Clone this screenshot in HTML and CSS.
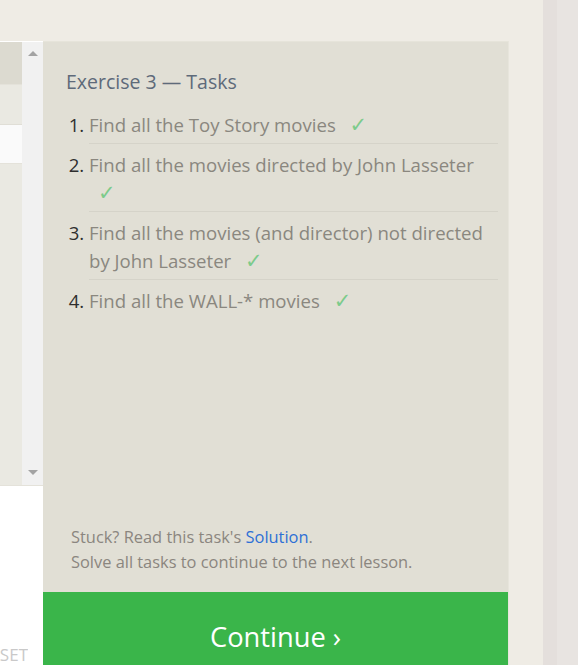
FILE: index.html
```html
<!DOCTYPE html>
<html>
<head>
<meta charset="utf-8">
<link rel="stylesheet" href="styles.css">
</head>
<body>
<div class="page">
  <div class="main">
    <div class="topbar"></div>
    <div class="workspace">
      <div class="editor-col">
        <div class="editor">
          <div class="code">
            <div class="row row-head"></div>
            <div class="row row-a"></div>
            <div class="row row-input"></div>
            <div class="row row-rest"></div>
          </div>
          <div class="scrollbar">
            <span class="arrow arrow-up"></span>
            <span class="arrow arrow-down"></span>
          </div>
        </div>
        <div class="editor-foot">
          <div class="reset"><span>RESET</span></div>
        </div>
      </div>
      <section class="tasks">
        <div class="tasks-body">
          <h2 class="tasks-title">Exercise 3 — Tasks</h2>
          <ol class="task-list">
            <li class="task">Find all the Toy Story movies <span class="check">✓</span></li>
            <li class="task">Find all the movies directed by John Lasseter <span class="check">✓</span></li>
            <li class="task">Find all the movies (and director) not directed by John Lasseter <span class="check">✓</span></li>
            <li class="task">Find all the WALL-* movies <span class="check">✓</span></li>
          </ol>
          <div class="help">
            <p>Stuck? Read this task's <a class="link" href="#">Solution</a>.</p>
            <p>Solve all tasks to continue to the next lesson.</p>
          </div>
        </div>
        <div class="continue">Continue ›</div>
      </section>
      <div class="gutter"></div>
    </div>
  </div>
  <div class="side-strip">
    <div class="strip-a"></div>
    <div class="strip-b"></div>
  </div>
</div>
</body>
</html>
```
FILE: styles.css
```css
html, body {
  margin: 0;
  padding: 0;
}
body {
  background: #efece5;
  font-family: "Open Sans", "Noto Sans", sans-serif;
  overflow: hidden;
}
.page {
  display: flex;
  width: 578px;
  height: 665px;
  overflow: hidden;
}
.main {
  width: 543px;
  flex: none;
  display: flex;
  flex-direction: column;
  background: #efece5;
}
.topbar {
  height: 41px;
  flex: none;
}
.workspace {
  display: flex;
  height: 641px;
  flex: none;
}
.editor-col {
  width: 43px;
  flex: none;
  display: flex;
  flex-direction: column;
  padding-top: 1px;
  background: #ffffff;
}
.editor {
  display: flex;
  height: 443px;
  border-bottom: 1px solid #e4e2da;
}
.code {
  width: 22px;
  display: flex;
  flex-direction: column;
}
.row-head {
  height: 42px;
  background: #dcdad0;
  border-bottom: 1px solid #e4e2da;
}
.row-a {
  height: 39px;
  background: #eae9e2;
  border-bottom: 1px solid #e0ded6;
}
.row-input {
  height: 38px;
  background: #fafafa;
  border-bottom: 1px solid #e4e2da;
}
.row-rest {
  flex: 1;
  background: #eae9e2;
}
.scrollbar {
  width: 21px;
  background: #f1f1f1;
  display: flex;
  flex-direction: column;
  justify-content: space-between;
  align-items: center;
  padding: 9px 0 10px;
  box-sizing: border-box;
}
.arrow {
  width: 0;
  height: 0;
  border-left: 5px solid transparent;
  border-right: 5px solid transparent;
}
.arrow-up {
  border-bottom: 5px solid #a3a3a3;
}
.arrow-down {
  border-top: 5px solid #a3a3a3;
}
.editor-foot {
  height: 180px;
  flex: none;
  display: flex;
  align-items: flex-end;
}
.reset {
  width: 28px;
  overflow: hidden;
  display: flex;
  justify-content: flex-end;
}
.reset span {
  font-size: 17px;
  line-height: 22px;
  color: #c9c9c9;
  white-space: nowrap;
}
.tasks {
  width: 466px;
  flex: none;
  display: flex;
  flex-direction: column;
  background: #e1dfd5;
  border-top: 1px solid #e6e4da;
  border-right: 1px solid #e7e5dc;
  box-sizing: border-box;
}
.tasks-body {
  flex: 1;
  display: flex;
  flex-direction: column;
  padding: 26px 10px 0 23px;
}
.tasks-title {
  margin: 0 0 8px;
  font-size: 19.5px;
  line-height: 28px;
  font-weight: normal;
  color: #5e6a7a;
}
.task-list {
  margin: 0;
  padding: 0 0 0 23px;
  flex: 1;
}
.task {
  font-size: 18.6px;
  line-height: 28px;
  color: #8a877f;
  padding: 7px 0 4px;
  border-bottom: 1px solid #d5d3c9;
}
.task:last-child {
  border-bottom: none;
}
.task::marker {
  color: #2e2e2e;
}
.check {
  font-family: "DejaVu Sans", sans-serif;
  font-size: 21px;
  line-height: 1;
  color: #7ccb8b;
  margin-left: 9px;
}
.help {
  padding: 0 0 18px 5px;
}
.help p {
  margin: 0;
  font-size: 16.4px;
  line-height: 25px;
  color: #8b867f;
}
.link {
  color: #2d6fd6;
  text-decoration: none;
}
.continue {
  flex: none;
  height: 90px;
  background: #3ab54a;
  color: #ffffff;
  font-size: 27.3px;
  line-height: 90px;
  text-align: center;
}
.gutter {
  flex: 1;
}
.side-strip {
  flex: 1;
  display: flex;
}
.strip-a {
  width: 14px;
  background: #e4dfdc;
}
.strip-b {
  flex: 1;
  background: #e8e4e1;
}
```
